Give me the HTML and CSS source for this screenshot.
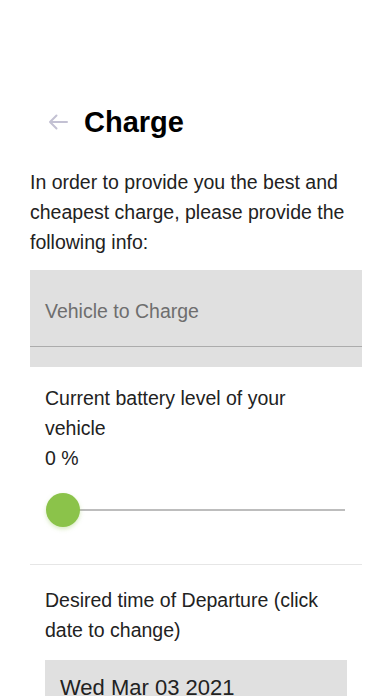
FILE: index.html
```html
<!DOCTYPE html>
<html lang="en">
<head>
    <meta charset="UTF-8">
    <meta name="viewport" content="width=device-width, initial-scale=1.0">
    <title>Charge</title>
    <link rel="stylesheet" href="styles.css">
</head>
<body>
    <div class="page">
        <div class="header">
            <button class="back-btn" aria-label="Back">
                <svg width="20" height="16" viewBox="0 0 20 16">
                    <path d="M19 8H2M8.5 1.5L2 8l6.5 6.5" fill="none" stroke="#c3c1d3" stroke-width="2" stroke-linecap="round" stroke-linejoin="round"/>
                </svg>
            </button>
            <h1>Charge</h1>
        </div>
        <p class="intro">In order to provide you the best and cheapest charge, please provide the following info:</p>

        <div class="select-field">
            <div class="select-label">Vehicle to Charge</div>
        </div>

        <div class="section">
            <div class="label">Current battery level of your vehicle</div>
            <div class="label">0 %</div>
            <div class="slider">
                <div class="track"></div>
                <div class="thumb"></div>
            </div>
        </div>

        <div class="section last">
            <div class="label">Desired time of Departure (click date to change)</div>
            <div class="date-box">Wed Mar 03 2021</div>
        </div>
    </div>
</body>
</html>
```

FILE: styles.css
```css
body {
    margin: 0;
    font-family: "Liberation Sans", Arial, sans-serif;
    background: #fff;
    color: #222;
}
.page {
    padding: 104px 30px 0 30px;
    overflow: hidden;
    height: 592px;
}
.header {
    display: flex;
    align-items: center;
    margin-bottom: 27px;
}
.back-btn {
    background: none;
    border: none;
    padding: 0;
    margin: 0 16px 0 18px;
    width: 20px;
    height: 16px;
    display: flex;
}
h1 {
    margin: 0;
    font-size: 29px;
    line-height: 36px;
    font-weight: bold;
    color: #000;
}
.intro {
    margin: 0;
    font-size: 19.5px;
    line-height: 30px;
}
.select-field {
    margin-top: 13px;
    background: #e0e0e0;
    height: 97px;
    position: relative;
}
.select-label {
    padding: 29px 15px 0 15px;
    font-size: 19.5px;
    line-height: 24px;
    color: #6e6e6e;
    height: 47px;
    border-bottom: 1.5px solid #acacac;
}
.section {
    padding: 0 15px;
    border-bottom: 1px solid #e6e6e6;
}
.section .label {
    font-size: 19.5px;
    line-height: 30px;
}
.section:not(.last) {
    padding-top: 16px;
}
.section.last {
    border-bottom: none;
    padding-top: 20px;
}
.slider {
    position: relative;
    height: 36px;
    margin: 19px 2px 36px 1px;
}
.track {
    position: absolute;
    left: 17px;
    right: 0;
    top: 17px;
    height: 2px;
    background: #bdbdbd;
}
.thumb {
    position: absolute;
    left: 0;
    top: 1px;
    width: 34px;
    height: 34px;
    border-radius: 50%;
    background: #8bc34a;
    box-shadow: 0 2px 4px rgba(139, 195, 74, 0.35);
}
.date-box {
    margin-top: 15px;
    background: #e0e0e0;
    height: 60px;
    padding: 15px 15px 0 15px;
    font-size: 22px;
    line-height: 26px;
    color: #222;
}
```
